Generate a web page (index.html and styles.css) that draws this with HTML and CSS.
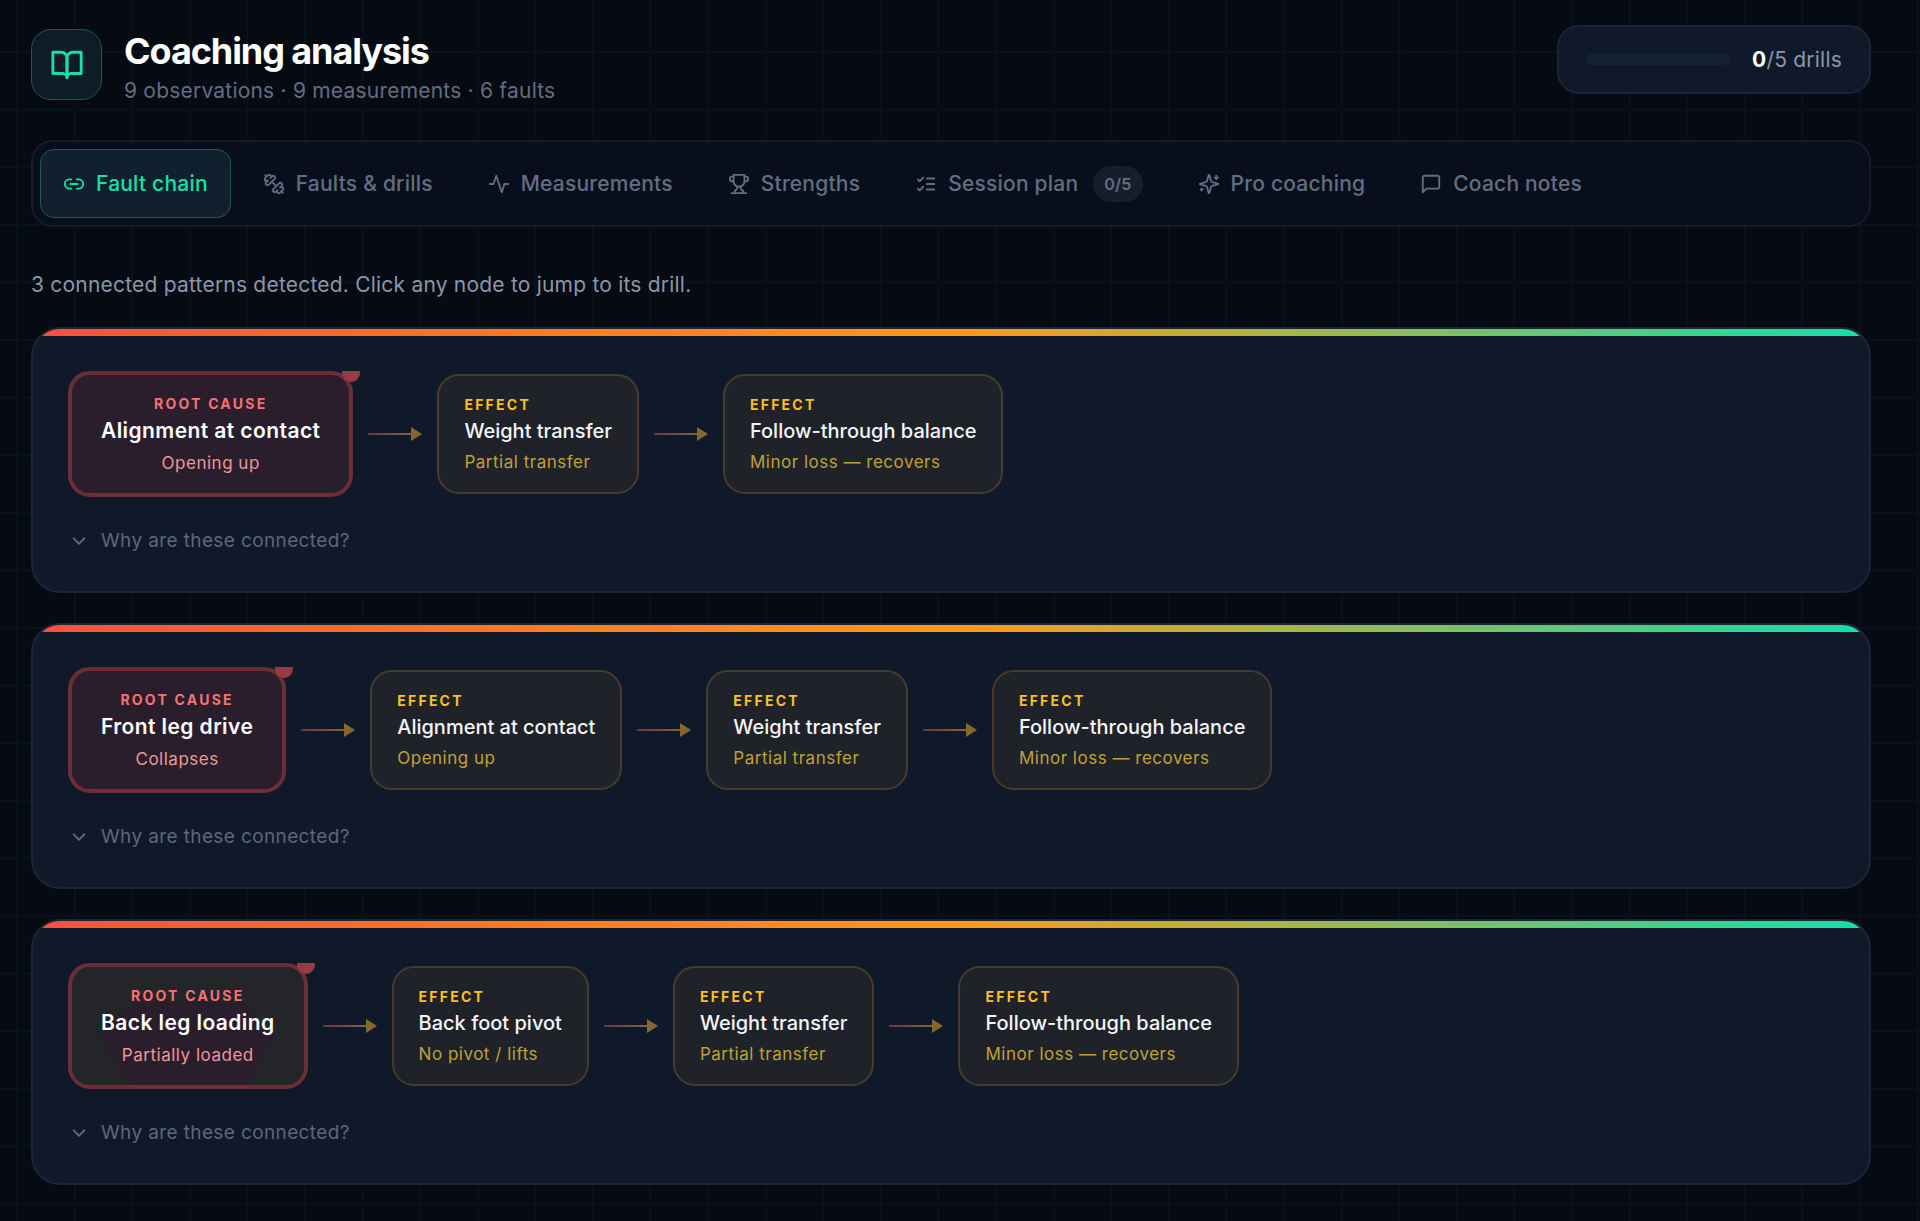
FILE: index.html
```html
<!DOCTYPE html>
<html lang="en">
<head>
  <meta charset="utf-8">
  <title>Coaching analysis</title>
  <link rel="stylesheet" href="styles.css">
</head>
<body>
  <!-- Shared icons -->
  <svg class="sprite" aria-hidden="true">
    <defs>
      <linearGradient id="line-fade" gradientUnits="userSpaceOnUse" x1="0" y1="0" x2="44" y2="0">
        <stop offset="0" stop-color="#78303c"/>
        <stop offset="1" stop-color="#86652d"/>
      </linearGradient>
    </defs>
    <symbol id="arrow" viewBox="0 0 54 14">
      <rect x="0" y="6" width="44" height="2" fill="url(#line-fade)"/>
      <path d="M43 0l11 7-11 7z" fill="#86682f"/>
    </symbol>
    <symbol id="chevron" viewBox="0 0 24 24">
      <path d="m6 9 6 6 6-6"/>
    </symbol>
  </svg>

  <header class="header">
    <div class="brand">
      <div class="brand-icon">
        <svg class="icon" viewBox="0 0 24 24"><path d="M2 3h6a4 4 0 0 1 4 4v14a3 3 0 0 0-3-3H2z"/><path d="M22 3h-6a4 4 0 0 0-4 4v14a3 3 0 0 1 3-3h7z"/></svg>
      </div>
      <div>
        <h1>Coaching analysis</h1>
        <p class="subtitle">9 observations · 9 measurements · 6 faults</p>
      </div>
    </div>
    <div class="progress">
      <div class="progress-bar"></div>
      <span><strong>0</strong>/5 drills</span>
    </div>
  </header>

  <nav class="tabs">
    <button class="tab active">
      <svg class="icon" viewBox="0 0 24 24"><path d="M9 17H7A5 5 0 0 1 7 7h2"/><path d="M15 7h2a5 5 0 1 1 0 10h-2"/><path d="M8 12h8"/></svg>
      Fault chain
    </button>
    <button class="tab">
      <svg class="icon" viewBox="0 0 24 24"><path d="M14.4 14.4 9.6 9.6"/><path d="M18.657 21.485a2 2 0 1 1-2.829-2.828l-1.767 1.768a2 2 0 1 1-2.829-2.829l6.364-6.364a2 2 0 1 1 2.829 2.829l-1.768 1.767a2 2 0 1 1 2.828 2.829z"/><path d="m21.5 21.5-1.4-1.4"/><path d="M3.9 3.9 2.5 2.5"/><path d="M6.404 12.768a2 2 0 1 1-2.829-2.829l1.768-1.767a2 2 0 1 1-2.828-2.829l2.828-2.828a2 2 0 1 1 2.829 2.828l1.767-1.768a2 2 0 1 1 2.829 2.829z"/></svg>
      Faults &amp; drills
    </button>
    <button class="tab">
      <svg class="icon" viewBox="0 0 24 24"><path d="M22 12h-4l-3 9L9 3l-3 9H2"/></svg>
      Measurements
    </button>
    <button class="tab">
      <svg class="icon" viewBox="0 0 24 24"><path d="M6 9H4.500a2.500 2.500 0 0 1 0-5H6"/><path d="M18 9h1.500a2.500 2.500 0 0 0 0-5H18"/><path d="M4 22h16"/><path d="M10 14.660V17c0 .55-.47.98-.97 1.210C7.850 18.750 7 20.240 7 22"/><path d="M14 14.660V17c0 .55.47.98.97 1.210C16.150 18.750 17 20.240 17 22"/><path d="M18 2H6v7a6 6 0 0 0 12 0V2Z"/></svg>
      Strengths
    </button>
    <button class="tab">
      <svg class="icon" viewBox="0 0 24 24"><path d="m3 17 2 2 4-4"/><path d="m3 7 2 2 4-4"/><path d="M13 6h8"/><path d="M13 12h8"/><path d="M13 18h8"/></svg>
      Session plan
      <span class="count">0/5</span>
    </button>
    <button class="tab">
      <svg class="icon" viewBox="0 0 24 24"><path d="M9.937 15.500A2 2 0 0 0 8.500 14.063l-6.135-1.582a.5.5 0 0 1 0-.962L8.500 9.936A2 2 0 0 0 9.937 8.500l1.582-6.135a.5.5 0 0 1 .963 0L14.063 8.500A2 2 0 0 0 15.500 9.937l6.135 1.581a.5.5 0 0 1 0 .964L15.500 14.063a2 2 0 0 0-1.437 1.437l-1.582 6.135a.5.5 0 0 1-.963 0z"/><path d="M20 3v4"/><path d="M22 5h-4"/><path d="M4 17v2"/><path d="M5 18H3"/></svg>
      Pro coaching
    </button>
    <button class="tab">
      <svg class="icon" viewBox="0 0 24 24"><path d="M21 15a2 2 0 0 1-2 2H7l-4 4V5a2 2 0 0 1 2-2h14a2 2 0 0 1 2 2z"/></svg>
      Coach notes
    </button>
  </nav>

  <main>
    <p class="summary">3 connected patterns detected. Click any node to jump to its drill.</p>

    <section class="card">
      <div class="chain">
        <button class="node root">
          <span class="label">Root cause</span>
          <span class="name">Alignment at contact</span>
          <span class="value">Opening up</span>
        </button>
        <svg class="arrow"><use href="#arrow"/></svg>
        <button class="node">
          <span class="label">Effect</span>
          <span class="name">Weight transfer</span>
          <span class="value">Partial transfer</span>
        </button>
        <svg class="arrow"><use href="#arrow"/></svg>
        <button class="node">
          <span class="label">Effect</span>
          <span class="name">Follow-through balance</span>
          <span class="value">Minor loss — recovers</span>
        </button>
      </div>
      <button class="why"><svg class="icon"><use href="#chevron"/></svg>Why are these connected?</button>
    </section>

    <section class="card">
      <div class="chain">
        <button class="node root">
          <span class="label">Root cause</span>
          <span class="name">Front leg drive</span>
          <span class="value">Collapses</span>
        </button>
        <svg class="arrow"><use href="#arrow"/></svg>
        <button class="node">
          <span class="label">Effect</span>
          <span class="name">Alignment at contact</span>
          <span class="value">Opening up</span>
        </button>
        <svg class="arrow"><use href="#arrow"/></svg>
        <button class="node">
          <span class="label">Effect</span>
          <span class="name">Weight transfer</span>
          <span class="value">Partial transfer</span>
        </button>
        <svg class="arrow"><use href="#arrow"/></svg>
        <button class="node">
          <span class="label">Effect</span>
          <span class="name">Follow-through balance</span>
          <span class="value">Minor loss — recovers</span>
        </button>
      </div>
      <button class="why"><svg class="icon"><use href="#chevron"/></svg>Why are these connected?</button>
    </section>

    <section class="card">
      <div class="chain">
        <button class="node root shaded">
          <span class="label">Root cause</span>
          <span class="name">Back leg loading</span>
          <span class="value">Partially loaded</span>
        </button>
        <svg class="arrow"><use href="#arrow"/></svg>
        <button class="node">
          <span class="label">Effect</span>
          <span class="name">Back foot pivot</span>
          <span class="value">No pivot / lifts</span>
        </button>
        <svg class="arrow"><use href="#arrow"/></svg>
        <button class="node">
          <span class="label">Effect</span>
          <span class="name">Weight transfer</span>
          <span class="value">Partial transfer</span>
        </button>
        <svg class="arrow"><use href="#arrow"/></svg>
        <button class="node">
          <span class="label">Effect</span>
          <span class="name">Follow-through balance</span>
          <span class="value">Minor loss — recovers</span>
        </button>
      </div>
      <button class="why"><svg class="icon"><use href="#chevron"/></svg>Why are these connected?</button>
    </section>
  </main>
</body>
</html>
```
FILE: styles.css
```css
* {
  box-sizing: border-box;
}

body {
  margin: 0;
  padding: 25px 49px 32px 31px;
  font-family: Inter, "Liberation Sans", sans-serif;
  font-size: 21px;
  letter-spacing: 0.01em;
  color: #8b97ab;
  background-color: #060a13;
  /* faint grid */
  background-image:
    linear-gradient(to right, #07121a 2px, transparent 2px),
    linear-gradient(to bottom, #07121a 2px, transparent 2px);
  background-size: 3vw 3vw;
  background-position: 16px 51px;
}

h1,
p {
  margin: 0;
}

button {
  font: inherit;
  letter-spacing: inherit;
  color: inherit;
  cursor: pointer;
}

.sprite {
  position: absolute;
  width: 0;
  height: 0;
}

.icon {
  flex: none;
  width: 22px;
  height: 22px;
  fill: none;
  stroke: currentColor;
  stroke-width: 2;
  stroke-linecap: round;
  stroke-linejoin: round;
}

/* Header */
.header {
  display: flex;
  justify-content: space-between;
  align-items: flex-start;
}

.brand {
  display: flex;
  align-items: center;
  gap: 22px;
}

.brand-icon {
  display: flex;
  align-items: center;
  justify-content: center;
  width: 71px;
  height: 71px;
  border: 1px solid #1d5a55;
  border-radius: 20px;
  background: #0d1c26;
  color: #19e0a6;
}

.brand-icon .icon {
  width: 34px;
  height: 34px;
}

h1 {
  font-size: 36px;
  line-height: 53px;
  letter-spacing: -0.03em;
  color: #fff;
}

.subtitle {
  line-height: 26px;
  color: #626e81;
}

.progress {
  display: flex;
  align-items: center;
  gap: 22px;
  height: 69px;
  padding: 0 27px;
  border: 2px solid #1b2534;
  border-radius: 22px;
  background: #101929;
}

.progress-bar {
  width: 144px;
  height: 11px;
  border-radius: 6px;
  background: #13232f;
}

.progress strong {
  color: #fff;
}

/* Tabs */
.tabs {
  display: flex;
  gap: 9px;
  margin-top: 36px;
  padding: 7px;
  border: 2px solid #171c2a;
  border-radius: 22px;
  background: #090e1d;
}

.tab {
  display: flex;
  align-items: center;
  gap: 11px;
  height: 69px;
  padding: 0 22px;
  border: 1px solid transparent;
  border-radius: 14px;
  background: none;
  font-weight: 500;
  color: #626e81;
}

.tab.active {
  border-color: #1d5a55;
  background: #10202e;
  color: #19e0a6;
}

.count {
  padding: 8px 11px;
  margin-left: 4px;
  border-radius: 18px;
  background: #171e2a;
  font-size: 16px;
  font-weight: 600;
  line-height: 20px;
}

/* Chains */
.summary {
  margin-top: 42px;
  margin-bottom: 27px;
  line-height: 31px;
}

.card {
  position: relative;
  overflow: hidden;
  margin-bottom: 30px;
  padding: 42px 35px 36px;
  border: 2px solid #1b2534;
  border-radius: 29px;
  background: #101929;
}

.card:last-child {
  margin-bottom: 0;
}

.card::before {
  content: "";
  position: absolute;
  inset: 0 0 auto;
  height: 7px;
  background: linear-gradient(90deg, #f9503f, #ff9a14 50%, #11dfaa);
}

.chain {
  display: flex;
  align-items: center;
  overflow: hidden;
}

.node {
  position: relative;
  display: flex;
  flex-direction: column;
  align-items: flex-start;
  flex: none;
  height: 120px;
  padding: 19px 25px;
  border: 2px solid #483a2c;
  border-radius: 22px;
  background: #202229;
}

.node.root {
  align-items: center;
  height: 126px;
  padding: 19px 29px;
  border: 4px solid #6b2e36;
  background: #2a1e2d;
}

/* grey panel with a darker plum wedge behind the text */
.node.shaded {
  background: #242529;
}

.node.shaded::before {
  content: "";
  position: absolute;
  inset: 0;
  background: #2a1e2d;
  clip-path: polygon(26% 30%, 74% 30%, 87% 58%, 76% 100%, 25% 100%, 12% 58%);
}

.node span {
  position: relative;
}

/* status dot on the corner */
.node.root::after {
  content: "";
  position: absolute;
  top: -11px;
  right: -11px;
  width: 18px;
  height: 18px;
  border-radius: 50%;
  background: #963c43;
}

.label {
  font-size: 14px;
  font-weight: 700;
  line-height: 20px;
  letter-spacing: 0.16em;
  text-transform: uppercase;
  color: #fcbf24;
}

.name {
  margin-bottom: 4px;
  font-size: 20px;
  font-weight: 500;
  line-height: 32px;
  letter-spacing: 0;
  color: #f3f5f9;
}

.value {
  font-size: 17px;
  line-height: 22px;
  letter-spacing: 0.03em;
  color: #c0a136;
}

.root .label {
  color: #f87171;
}

.root .name {
  font-size: 21px;
  font-weight: 600;
  line-height: 34px;
  letter-spacing: 0.02em;
  color: #fff;
}

.root .value {
  color: #ee9797;
}

.arrow {
  flex: none;
  width: 54px;
  height: 14px;
  margin: 0 15px;
}

.why {
  display: flex;
  align-items: center;
  gap: 11px;
  height: 29px;
  margin-top: 29px;
  padding: 0;
  border: 0;
  background: none;
  font-size: 19px;
  letter-spacing: 0.02em;
  color: #5c687a;
}
```
